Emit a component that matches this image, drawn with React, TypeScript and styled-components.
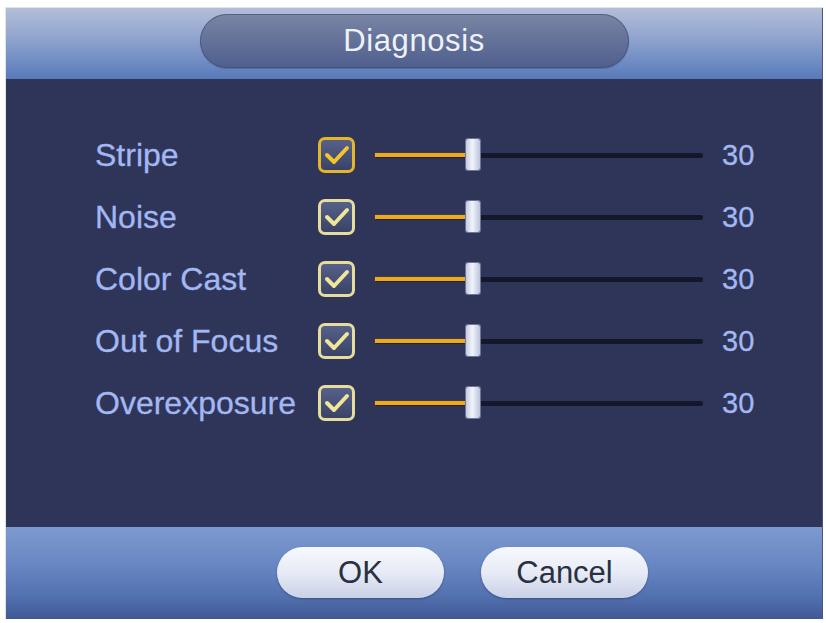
import React from "react";
import styled, { createGlobalStyle } from "styled-components";

const GlobalStyle = createGlobalStyle`
    html, body {
        margin: 0;
        padding: 0;
        background: #ffffff;
    }
    body {
        font-family: "Liberation Sans", Arial, sans-serif;
    }
`;

const Dialog = styled.div`
    margin: 8px 0 0 6px;
    width: 816px;
    height: 611px;
    display: flex;
    flex-direction: column;
    box-shadow: 1px 0 0 #4d5670, 0 0 0 1px #dfe3ea;
`;

const Header = styled.div`
    height: 71px;
    display: flex;
    justify-content: center;
    align-items: flex-start;
    padding-top: 6px;
    box-sizing: border-box;
    background: linear-gradient(180deg, #b3bed8 0%, #97a9d0 35%, #7590c6 70%, #587ab9 100%);
`;

const TitlePill = styled.div`
    width: 429px;
    height: 54px;
    border-radius: 27px;
    display: flex;
    align-items: center;
    justify-content: center;
    background: linear-gradient(180deg, #7a86a4 0%, #66739a 45%, #4f5f8e 100%);
    box-shadow: inset 0 0 0 1px rgba(60, 72, 110, 0.6), 0 1px 1px rgba(40, 50, 90, 0.3);
    color: #eef1f8;
    font-size: 31px;
    letter-spacing: 0.6px;
`;

const Body = styled.div`
    flex: 1;
    background: #2f3558;
    padding: 45px 0 0 89px;
    box-sizing: border-box;
`;

const Row = styled.div`
    height: 62px;
    display: flex;
    align-items: center;
`;

const Label = styled.div`
    width: 223px;
    color: #a3b7f2;
    font-size: 32px;
    white-space: nowrap;
    -webkit-text-stroke: 0.3px #a3b7f2;
`;

const CheckBox = styled.div<{ $focused?: boolean }>`
    width: 37px;
    height: 36px;
    box-sizing: border-box;
    border-radius: 7px;
    border: 3px solid ${(p) => (p.$focused ? "#e5b52a" : "#e6dc9e")};
    background: linear-gradient(180deg, #56618a 0%, #3a4266 100%);
    display: flex;
    align-items: center;
    justify-content: center;
`;

const Slider = styled.div`
    position: relative;
    margin-left: 20px;
    width: 328px;
    height: 32px;
    display: flex;
    align-items: center;
`;

const Track = styled.div`
    width: 100%;
    height: 5px;
    background: #15182a;
    border-radius: 2px;
`;

const Fill = styled.div`
    position: absolute;
    left: 0;
    top: 14px;
    height: 4px;
    background: #f0a81c;
    box-shadow: 0 0 1px #c07810;
`;

const Thumb = styled.div`
    position: absolute;
    top: 0;
    width: 14px;
    height: 31px;
    border-radius: 2px;
    background: linear-gradient(90deg, #c4cbe2 0%, #f2f4fb 45%, #bcc4de 100%);
    box-shadow: 0 0 0 1px #6d7698;
`;

const Value = styled.div`
    margin-left: 19px;
    color: #a3b7f2;
    font-size: 29px;
    -webkit-text-stroke: 0.3px #a3b7f2;
`;

const Footer = styled.div`
    height: 92px;
    display: flex;
    align-items: flex-start;
    padding: 20px 0 0 271px;
    box-sizing: border-box;
    gap: 37px;
    background: linear-gradient(180deg, #7d99cf 0%, #6987c3 40%, #5271af 75%, #3f5994 100%);
`;

const Button = styled.div`
    width: 167px;
    height: 51px;
    border-radius: 26px;
    display: flex;
    align-items: center;
    justify-content: center;
    background: linear-gradient(180deg, #f6f8fd 0%, #e7ebf6 50%, #c9d1e6 100%);
    box-shadow: 0 1px 2px rgba(30, 40, 80, 0.45);
    color: #2a3042;
    font-size: 31px;
`;

function Check({ color }: { color: string }) {
    return (
        <svg width="26" height="22" viewBox="0 0 26 22">
            <polyline
                points="3,11 10,18 23,4"
                fill="none"
                stroke={color}
                strokeWidth="4"
                strokeLinecap="round"
                strokeLinejoin="round"
            />
        </svg>
    );
}

const items = ["Stripe", "Noise", "Color Cast", "Out of Focus", "Overexposure"];

function SliderRow({ label, value, focused }: { label: string; value: number; focused?: boolean }) {
    const thumbLeft = Math.round((value / 100) * (328 - 24));
    return (
        <Row>
            <Label>{label}</Label>
            <CheckBox $focused={focused}>
                <Check color={focused ? "#f2c42e" : "#f0e69a"} />
            </CheckBox>
            <Slider>
                <Track />
                <Fill style={{ width: thumbLeft }} />
                <Thumb style={{ left: thumbLeft }} />
            </Slider>
            <Value>{value}</Value>
        </Row>
    );
}

export default function App() {
    return (
        <>
            <GlobalStyle />
            <Dialog>
                <Header>
                    <TitlePill>Diagnosis</TitlePill>
                </Header>
                <Body>
                    {items.map((name, i) => (
                        <SliderRow key={name} label={name} value={30} focused={i === 0} />
                    ))}
                </Body>
                <Footer>
                    <Button>OK</Button>
                    <Button>Cancel</Button>
                </Footer>
            </Dialog>
        </>
    );
}
